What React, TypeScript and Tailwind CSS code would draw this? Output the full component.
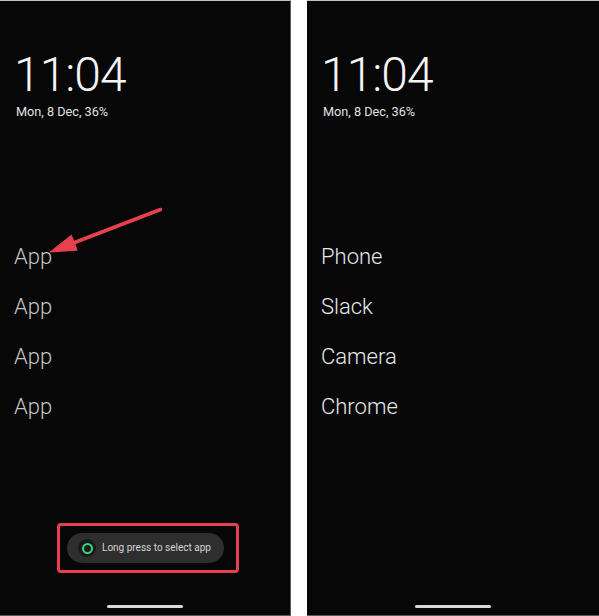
import React from "react";

const font = { fontFamily: "Roboto, 'Noto Sans', sans-serif" };

function Clock() {
  return (
    <div className="pl-[14px]">
      <div className="mt-[50px] text-[48px] leading-[48px] font-light text-[#f4f4f4] tracking-[-1px]">11:04</div>
      <div className="mt-[5px] text-[12.7px] leading-[16px] text-[#e2e2e2] pl-[2px]">Mon, 8 Dec, 36%</div>
    </div>
  );
}

function AppList({ items, color }: { items: string[]; color: string }) {
  return (
    <div className={`mt-[112px] pl-[14px] flex flex-col font-light ${color}`}>
      {items.map((t, i) => (
        <div key={i} className="text-[22px] leading-[50px]">
          {t}
        </div>
      ))}
    </div>
  );
}

export default function App() {
  return (
    <div className="w-[599px] h-[616px] bg-white flex" style={font}>
      <div className="relative w-[291px] h-full bg-[#070707] border-t border-b border-r border-t-[#c4c4c4] border-b-[#5a5a5a] border-r-[#5a5a5a] flex flex-col">
        <Clock />
        <AppList items={["App", "App", "App", "App"]} color="text-[#c6c6c6]" />
        <div className="mt-auto ml-[57px] w-[182px] h-[50px] border-[3px] border-[#e8404f] rounded-[4px] flex items-center pl-[7px]">
          <div className="w-[157px] h-[30px] rounded-full bg-[#2e2e2e] flex items-center pl-[11px] gap-[6px]">
            <div className="w-[18px] h-[18px] rounded-full bg-[#1a1a1a] flex items-center justify-center">
              <div className="w-[11px] h-[11px] rounded-full border-2 border-[#34d47c]" />
            </div>
            <span className="text-[10px] leading-[12px] text-[#d4d4d4] whitespace-nowrap">Long press to select app</span>
          </div>
        </div>
        <div className="mt-[32px] mb-[7px] mx-auto w-[76px] h-[3px] rounded-full bg-[#d8d8d8]" />
        <svg className="absolute left-0 top-0" width="291" height="616" viewBox="0 0 291 616">
          <line x1="160.5" y1="208.5" x2="72" y2="242.5" stroke="#e8404f" strokeWidth="3.5" strokeLinecap="round" />
          <polygon points="50,251 71.4,234.2 77.2,249.2" fill="#e8404f" stroke="#e8404f" strokeWidth="1" strokeLinejoin="round" />
        </svg>
      </div>
      <div className="w-[16px] h-full bg-white" />
      <div className="flex-1 h-full bg-[#070707] border-t border-b border-t-[#c4c4c4] border-b-[#5a5a5a] flex flex-col">
        <Clock />
        <AppList items={["Phone", "Slack", "Camera", "Chrome"]} color="text-[#e8e8e8]" />
        <div className="mt-auto mb-[7px] mx-auto w-[76px] h-[3px] rounded-full bg-[#d8d8d8]" />
      </div>
    </div>
  );
}
